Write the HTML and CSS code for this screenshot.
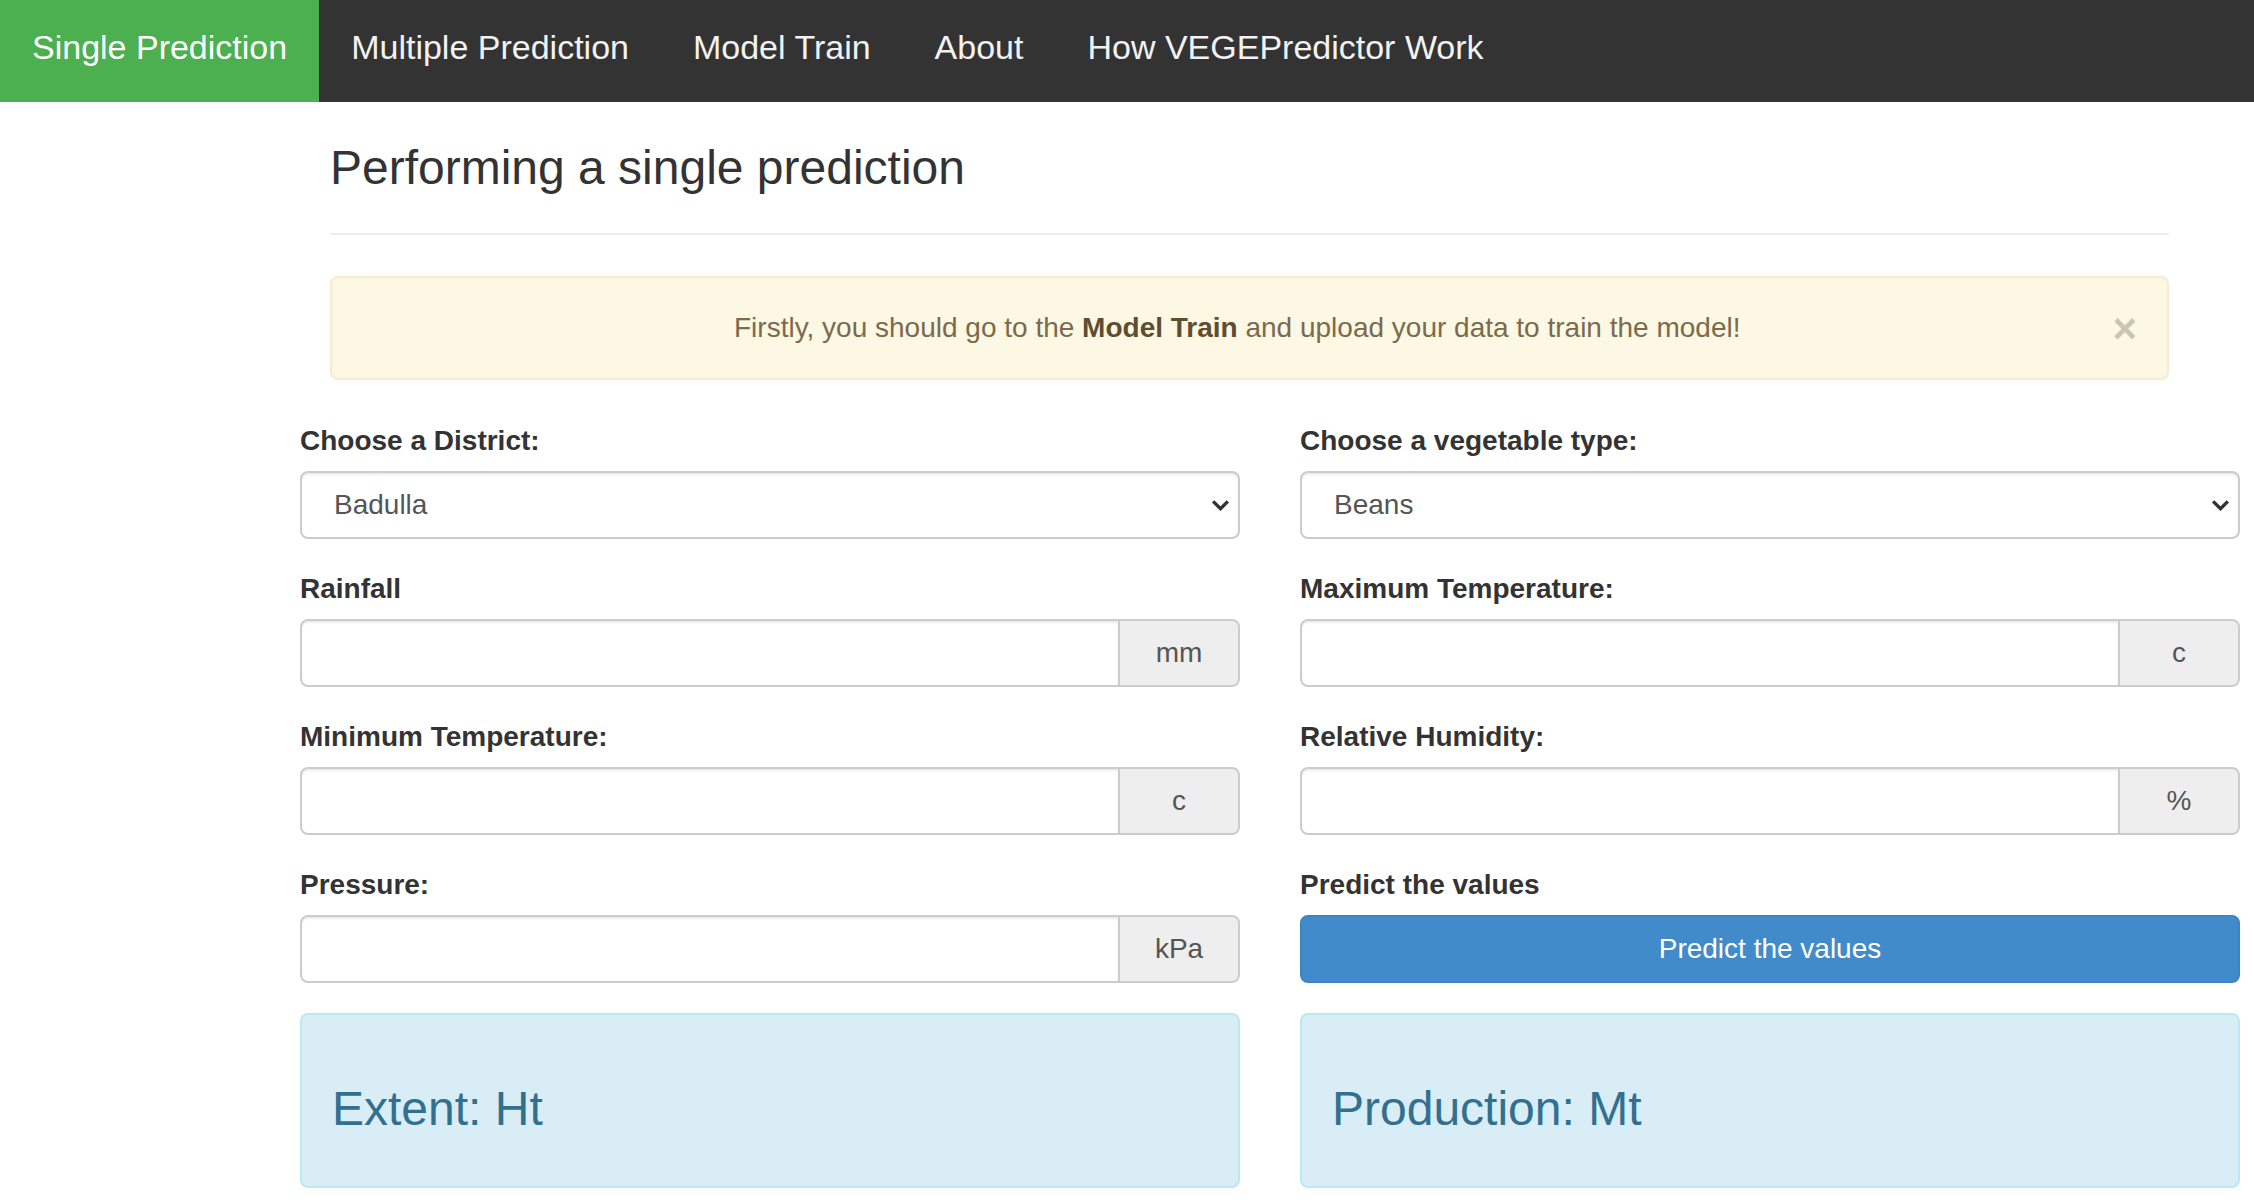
FILE: index.html
```html
<!DOCTYPE html>
<html lang="en">
<head>
<meta charset="utf-8">
<title>VEGEPredictor - Single Prediction</title>
<link rel="stylesheet" href="styles.css">
</head>
<body>
<nav class="topnav">
  <a class="nav-item active" href="#">Single Prediction</a>
  <a class="nav-item" href="#">Multiple Prediction</a>
  <a class="nav-item" href="#">Model Train</a>
  <a class="nav-item" href="#">About</a>
  <a class="nav-item" href="#">How VEGEPredictor Work</a>
</nav>
<main class="page">
  <div class="header-wrap">
    <div class="page-header">
      <h3 class="page-title">Performing a single prediction</h3>
    </div>
    <div class="alert">
      <button class="close" type="button">&times;</button>
      Firstly, you should go to the <strong class="alert-strong">Model Train</strong> and upload your data to train the model!
    </div>
  </div>
  <form class="form-grid">
    <div class="form-group">
      <label class="form-label">Choose a District:</label>
      <select class="form-select"><option>Badulla</option></select>
    </div>
    <div class="form-group">
      <label class="form-label">Choose a vegetable type:</label>
      <select class="form-select"><option>Beans</option></select>
    </div>
    <div class="form-group">
      <label class="form-label">Rainfall</label>
      <div class="input-group"><input class="form-input" type="text"><span class="addon">mm</span></div>
    </div>
    <div class="form-group">
      <label class="form-label">Maximum Temperature:</label>
      <div class="input-group"><input class="form-input" type="text"><span class="addon">c</span></div>
    </div>
    <div class="form-group">
      <label class="form-label">Minimum Temperature:</label>
      <div class="input-group"><input class="form-input" type="text"><span class="addon">c</span></div>
    </div>
    <div class="form-group">
      <label class="form-label">Relative Humidity:</label>
      <div class="input-group"><input class="form-input" type="text"><span class="addon">%</span></div>
    </div>
    <div class="form-group">
      <label class="form-label">Pressure:</label>
      <div class="input-group"><input class="form-input" type="text"><span class="addon">kPa</span></div>
    </div>
    <div class="form-group">
      <label class="form-label">Predict the values</label>
      <button class="btn-primary" type="button">Predict the values</button>
    </div>
    <div class="result"><h3 class="result-title">Extent: Ht</h3></div>
    <div class="result"><h3 class="result-title">Production: Mt</h3></div>
  </form>
</main>
</body>
</html>
```
FILE: styles.css
```css
* { box-sizing: border-box; }
html, body { margin: 0; padding: 0; }
body {
  font-family: "Liberation Sans", Arial, Helvetica, sans-serif;
  font-size: 28px;
  color: #333;
  background: #fff;
  overflow: hidden;
}

.topnav {
  display: flex;
  height: 102px;
  background: #333;
}
.nav-item {
  display: block;
  padding: 28px 32px 0;
  line-height: 38px;
  font-size: 34px;
  color: #f2f2f2;
  text-decoration: none;
}
.nav-item.active { background: #4caf50; color: #fff; }

.header-wrap {
  margin-left: 330px;
  width: 1839px;
}
.page-header {
  padding: 40px 0 38px;
  border-bottom: 2px solid #eee;
}
.page-title {
  margin: 0;
  font-size: 48px;
  line-height: 52.8px;
  font-weight: normal;
  color: #333;
}
.alert {
  margin: 41px 0 41px;
  padding: 30px;
  border: 2px solid #faebcc;
  border-radius: 8px;
  background: #fcf8e3;
  color: #7b6a4c;
  text-align: center;
  line-height: 40px;
  font-size: 28px;
}
.alert-strong { color: #5e4d30; font-weight: bold; }
.close {
  float: right;
  padding: 0;
  border: 0;
  background: none;
  font-family: inherit;
  font-size: 42px;
  font-weight: bold;
  line-height: 42px;
  color: #000;
  opacity: 0.2;
}

.form-grid {
  margin: 0 0 0 300px;
  display: grid;
  grid-template-columns: 940px 940px;
  column-gap: 60px;
}
.form-group { margin-bottom: 30px; }
.form-label {
  display: block;
  margin-bottom: 10px;
  line-height: 40px;
  font-size: 28px;
  font-weight: bold;
  color: #333;
}
.form-select {
  display: block;
  width: 100%;
  height: 68px;
  padding: 0 40px 0 32px;
  font-family: inherit;
  font-size: 28px;
  color: #555;
  background-color: #fff;
  background-image: url("data:image/svg+xml;utf8,<svg xmlns='http://www.w3.org/2000/svg' viewBox='0 0 20 13'><path d='M2 2.5 L10 10.5 L18 2.5' fill='none' stroke='%23333' stroke-width='3.6'/></svg>");
  background-repeat: no-repeat;
  background-position: right 8px center;
  background-size: 19px 12px;
  border: 2px solid #ccc;
  border-radius: 8px;
  box-shadow: inset 0 2px 2px rgba(0,0,0,0.075);
  -webkit-appearance: none;
  appearance: none;
}
.input-group {
  display: flex;
  height: 68px;
}
.form-input {
  flex: 1;
  min-width: 0;
  height: 68px;
  margin: 0;
  padding: 0 24px;
  font-family: inherit;
  font-size: 28px;
  color: #555;
  border: 2px solid #ccc;
  border-radius: 8px 0 0 8px;
  box-shadow: inset 0 2px 2px rgba(0,0,0,0.075);
  background: #fff;
}
.addon {
  width: 120px;
  display: flex;
  align-items: center;
  justify-content: center;
  font-size: 28px;
  color: #555;
  background: #eee;
  border: 2px solid #ccc;
  border-left: 0;
  border-radius: 0 8px 8px 0;
}
.btn-primary {
  display: block;
  width: 100%;
  height: 68px;
  margin: 0;
  padding: 0;
  font-family: inherit;
  font-size: 28px;
  color: #fff;
  background: #428bca;
  border: 2px solid #3c84c4;
  border-radius: 8px;
}
.result {
  padding: 30px;
  border: 2px solid #bce8f1;
  border-radius: 8px;
  background: #d9edf7;
}
.result-title {
  margin: 38px 0 20px;
  font-size: 48px;
  line-height: 52.8px;
  font-weight: normal;
  color: #31708f;
}
```
